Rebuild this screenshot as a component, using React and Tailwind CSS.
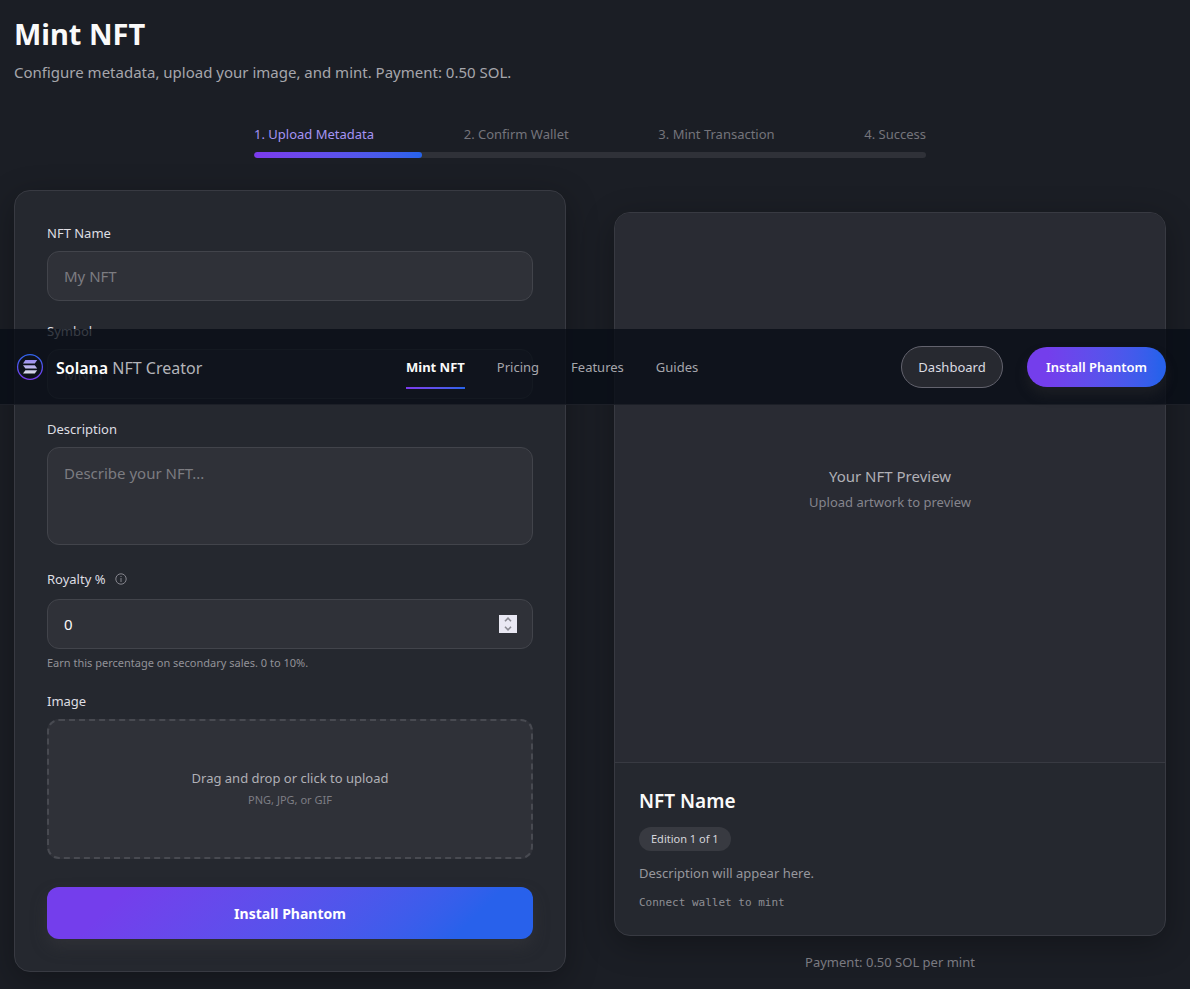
import { useState } from "react";

const STEPS = ["1. Upload Metadata", "2. Confirm Wallet", "3. Mint Transaction", "4. Success"];
const LINKS = ["Pricing", "Features", "Guides"];

function Logo() {
  return (
    <svg width="28" height="28" viewBox="0 0 28 28" fill="none" aria-hidden="true">
      <defs>
        <linearGradient id="ring" x1="14" y1="1" x2="14" y2="27" gradientUnits="userSpaceOnUse">
          <stop stopColor="#2f66ee" />
          <stop offset="1" stopColor="#7c3aed" />
        </linearGradient>
        <linearGradient id="bars" x1="14" y1="7" x2="14" y2="21" gradientUnits="userSpaceOnUse">
          <stop stopColor="#9a8cf0" />
          <stop offset="1" stopColor="#dedee8" />
        </linearGradient>
      </defs>
      <circle cx="14" cy="14" r="12.4" stroke="url(#ring)" strokeWidth="1.3" />
      <path
        fill="url(#bars)"
        d="M9.4 7h11.8L18.8 10.4H7zM7 12.2h11.8l2.4 3.2H9.4zM9.4 17.2h11.8l-2.4 3.4H7z"
      />
    </svg>
  );
}

function InfoIcon() {
  return (
    <svg width="12" height="12" viewBox="0 0 12 12" fill="none" stroke="#85858d" aria-hidden="true">
      <circle cx="6" cy="6" r="5.2" />
      <path d="M6 5v4M6 3v1" />
    </svg>
  );
}

function Header() {
  return (
    <header className="absolute inset-x-0 top-[329px] z-10 border-b border-[#1c1f27] bg-[#080d16]/78">
      <div className="flex h-[75px] items-center justify-between pl-4 pr-6">
        <a href="#" className="flex w-[356px] items-center gap-3 text-[16px] text-[#b4b4ba]">
          <Logo />
          <span className="pt-0.5">
            <span className="font-semibold text-white">Solana</span> NFT Creator
          </span>
        </a>
        <nav className="flex flex-1 items-center gap-8 pl-[34px] pt-0.5 text-[13px] text-[#a6a6ac]">
          <a href="#" className="relative py-2 font-bold text-[#fafafa]">
            Mint NFT
            <span className="absolute inset-x-0 -bottom-1 h-0.5 bg-linear-to-r from-[#7c3aed] to-[#2563eb]" />
          </a>
          {LINKS.map((l) => (
            <a key={l} href="#">{l}</a>
          ))}
        </nav>
        <div className="flex items-center gap-6 text-[13px]">
          <button className="h-[42px] w-[102px] rounded-full border border-[#63636e] bg-[#272930] pt-0.5 text-[#dcdce2]">
            Dashboard
          </button>
          <button className="h-10 w-[139px] rounded-full bg-linear-to-r from-[#743eec] from-15% to-[#2861eb] to-95% pt-0.5 font-semibold text-white shadow-[0_8px_12px_rgba(48,48,48,0.35)]">
            Install Phantom
          </button>
        </div>
      </div>
    </header>
  );
}

const label = "block text-[13px] leading-5 text-[#dedee3]";
const field =
  "block w-full rounded-xl border border-[#42444b] bg-[#2f3138] px-4 text-[15px] text-[#fafafa] placeholder:text-[#7c7c81] outline-none";

function RoyaltyInput() {
  const [value, setValue] = useState(0);
  const step = (d) => setValue((v) => Math.min(10, Math.max(0, Number(v) + d)));
  return (
    <div className="relative">
      <input
        id="royalty"
        type="number"
        min="0"
        max="10"
        value={value}
        onChange={(e) => setValue(e.target.value)}
        className={`${field} h-[50px] [appearance:textfield] [&::-webkit-inner-spin-button]:appearance-none`}
      />
      <div className="absolute right-4 top-4 flex h-[18px] w-[18px] flex-col bg-[#e9e8f3]">
        <button type="button" aria-label="Increase royalty" onClick={() => step(1)} className="flex h-[9px] items-center justify-center">
          <svg width="8" height="5" viewBox="0 0 8 5" fill="none" stroke="#8a8a92" strokeWidth="1.6"><path d="M1 4.2 4 1.2l3 3" /></svg>
        </button>
        <button type="button" aria-label="Decrease royalty" onClick={() => step(-1)} className="flex h-[9px] items-center justify-center">
          <svg width="8" height="5" viewBox="0 0 8 5" fill="none" stroke="#8a8a92" strokeWidth="1.6"><path d="m1 .8 3 3 3-3" /></svg>
        </button>
      </div>
    </div>
  );
}

function MintForm() {
  return (
    <form
      onSubmit={(e) => e.preventDefault()}
      className="rounded-2xl border border-[#383a42] bg-[#25282f] p-8 shadow-[0_8px_32px_rgba(0,0,0,0.3)]"
    >
      <div className="flex flex-col gap-5">
        <div>
          <label htmlFor="name" className={`${label} mb-2`}>NFT Name</label>
          <input id="name" placeholder="My NFT" className={`${field} h-[50px]`} />
        </div>
        <div>
          <label htmlFor="symbol" className={`${label} mb-2`}>Symbol</label>
          <input id="symbol" placeholder="MNFT" className={`${field} h-[50px]`} />
        </div>
        <div>
          <label htmlFor="description" className={`${label} mb-2`}>Description</label>
          <textarea id="description" placeholder="Describe your NFT..." className={`${field} h-[98px] resize-none py-3.5`} />
        </div>
        <div className="mt-1">
          <div className="mb-2.5 flex items-center gap-2.5">
            <label htmlFor="royalty" className={label}>Royalty %</label>
            <InfoIcon />
          </div>
          <RoyaltyInput />
          <p className="mt-1.5 text-[11px] leading-4 text-[#929298]">Earn this percentage on secondary sales. 0 to 10%.</p>
        </div>
        <div>
          <label htmlFor="image" className={`${label} mb-2`}>Image</label>
          <label
            htmlFor="image"
            className="flex h-[140px] cursor-pointer flex-col items-center justify-center rounded-xl border-2 border-dashed border-[#484a51] bg-[#2f3138] text-[13px] leading-5 text-[#b0b0b6]"
          >
            <span>Drag and drop or click to upload</span>
            <span className="mt-0.5 text-[11px] text-[#7d7d84]">PNG, JPG, or GIF</span>
            <input id="image" type="file" accept="image/*" className="sr-only" />
          </label>
        </div>
      </div>
      <button className="mt-7 h-[52px] w-full rounded-xl bg-linear-135 from-[#743eec] from-15% to-[#2861eb] to-85% text-[14px] font-bold text-white shadow-[0_8px_16px_rgba(60,60,66,0.4)]">
        Install Phantom
      </button>
    </form>
  );
}

function Preview() {
  return (
    <section className="pt-[22px]">
      <div className="overflow-hidden rounded-2xl border border-[#383a42] bg-[#25282f] shadow-[0_8px_32px_rgba(0,0,0,0.3)]">
        <div className="flex aspect-square flex-col items-center justify-center border-b border-[#383a42] bg-[#292b33]">
          <p className="text-[15px] leading-6 text-[#b0b0b6]">Your NFT Preview</p>
          <p className="mt-1 text-[13px] leading-5 text-[#85858d]">Upload artwork to preview</p>
        </div>
        <div className="p-6">
          <h2 className="mt-0.5 text-[19px] font-semibold leading-6 text-[#fafafa]">NFT Name</h2>
          <span className="mt-3.5 flex h-6 w-fit items-center rounded-full bg-[#383a41] px-3 text-[11px] text-[#d6d6dc]">
            Edition 1 of 1
          </span>
          <p className="mt-3 text-[13px] leading-5 text-[#97979d]">Description will appear here.</p>
          <p className="mt-3 font-['DejaVu_Sans_Mono',monospace] text-[11px] leading-4 text-[#8e8e94]">Connect wallet to mint</p>
        </div>
      </div>
      <p className="mt-4 text-center text-[13px] leading-5 text-[#7a7a81]">Payment: 0.50 SOL per mint</p>
    </section>
  );
}

export default function App() {
  return (
    <div className="relative min-h-screen bg-[#1b1e25] font-['Noto_Sans','Open_Sans',sans-serif]">
      <Header />
      <main className="pb-4 pl-3.5 pr-6 pt-3.5">
        <h1 className="text-[29px] font-bold leading-10 text-[#fafafa]">Mint NFT</h1>
        <p className="mt-1.5 text-[15px] leading-6 text-[#a6a6ac]">
          Configure metadata, upload your image, and mint. Payment: 0.50 SOL.
        </p>
        <div className="mx-auto mt-10 max-w-2xl">
          <ol className="flex justify-between text-[13px] leading-5">
            {STEPS.map((s, i) => (
              <li key={s} className={i === 0 ? "text-[#a594f5]" : "text-[#74747b]"}>{s}</li>
            ))}
          </ol>
          <div className="mt-2 h-1.5 overflow-hidden rounded-full bg-[#2f3138]">
            <div className="h-full w-1/4 rounded-full bg-linear-to-r from-[#7c3aed] to-[#2563eb]" />
          </div>
        </div>
        <div className="mt-8 grid grid-cols-2 items-start gap-12">
          <MintForm />
          <Preview />
        </div>
      </main>
    </div>
  );
}
